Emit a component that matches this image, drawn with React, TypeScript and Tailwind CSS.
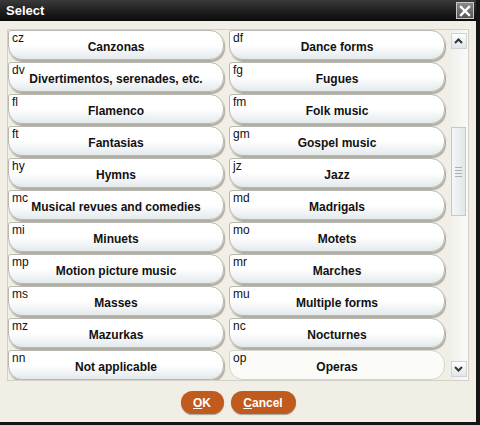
import React from 'react';

const items: [string, string][] = [
  ['cz', 'Canzonas'],
  ['df', 'Dance forms'],
  ['dv', 'Divertimentos, serenades, etc.'],
  ['fg', 'Fugues'],
  ['fl', 'Flamenco'],
  ['fm', 'Folk music'],
  ['ft', 'Fantasias'],
  ['gm', 'Gospel music'],
  ['hy', 'Hymns'],
  ['jz', 'Jazz'],
  ['mc', 'Musical revues and comedies'],
  ['md', 'Madrigals'],
  ['mi', 'Minuets'],
  ['mo', 'Motets'],
  ['mp', 'Motion picture music'],
  ['mr', 'Marches'],
  ['ms', 'Masses'],
  ['mu', 'Multiple forms'],
  ['mz', 'Mazurkas'],
  ['nc', 'Nocturnes'],
  ['nn', 'Not applicable'],
  ['op', 'Operas'],
];

function Choice({ code, label, faded }: { code: string; label: string; faded?: boolean }) {
  return (
    <button
      className={
        faded
          ? 'relative h-[30px] w-[216px] rounded-[14px] rounded-tl-[3px] border border-[#d6d5cc] bg-[#fbfbf8] text-left'
          : 'relative h-[30px] w-[216px] rounded-[14px] rounded-tl-[3px] border border-[#b9b8b0] bg-gradient-to-b from-white via-white to-[#e3eaec] shadow-[1px_2px_1px_rgba(90,88,75,0.45)] text-left'
      }
    >
      <span className="absolute left-[3px] top-[1px] text-[12px] leading-[13px] text-[#111]">{code}</span>
      <span className="absolute left-0 right-0 top-[9px] text-center text-[12px] font-bold leading-[14px] text-[#111]">
        {label}
      </span>
    </button>
  );
}

function Chevron({ up }: { up?: boolean }) {
  return (
    <svg width="9" height="6" viewBox="0 0 9 6">
      <path d={up ? 'M1 5 L4.5 1.5 L8 5' : 'M1 1 L4.5 4.5 L8 1'} stroke="#333" strokeWidth="2" fill="none" />
    </svg>
  );
}

export default function App() {
  return (
    <div
      className="flex h-[425px] w-[480px] flex-col overflow-hidden border-b-[3px] border-r-[4px] border-[#151515] bg-[#f0eee5]"
      style={{ fontFamily: '"Liberation Sans", Arial, sans-serif' }}
    >
      <div className="flex h-[21px] shrink-0 items-center justify-between bg-gradient-to-b from-[#3a3a3a] to-[#0a0a0a] pl-[6px] pr-[2px]">
        <span className="text-[13px] font-bold text-white">Select</span>
        <div className="flex h-[17px] w-[18px] items-center justify-center border border-[#c8c8c8] bg-gradient-to-b from-[#8a8a8a] to-[#555]">
          <svg width="12" height="12" viewBox="0 0 12 12">
            <path d="M2 2 L10 10 M10 2 L2 10" stroke="white" strokeWidth="2.4" strokeLinecap="square" />
          </svg>
        </div>
      </div>

      <div className="pl-[7px] pt-[8px]">
        <div className="flex h-[352px] w-[462px] overflow-hidden border border-[#d3d1c7]">
          <div className="grid h-full flex-1 grid-cols-[216px_216px] content-start gap-x-[5px] gap-y-[2px] overflow-hidden">
            {items.map(([c, l]) => (
              <Choice key={c} code={c} label={l} faded={c === 'op'} />
            ))}
          </div>
          <div className="flex w-[19px] flex-col items-center bg-gradient-to-r from-[#eeeeea] to-[#fafaf8] pt-[3px] pb-[3px]">
            <div className="flex h-[16px] w-[16px] items-center justify-center border border-[#cfd3d6] bg-gradient-to-b from-white to-[#dfe5e8]">
              <Chevron up />
            </div>
            <div className="mt-[78px] flex h-[89px] w-[15px] items-center justify-center border border-[#c3c8cc] bg-gradient-to-r from-[#f4f6f7] to-[#e1e7ea]">
              <div className="flex flex-col gap-[2px]">
                <div className="h-px w-[7px] bg-[#a8b0b5]" />
                <div className="h-px w-[7px] bg-[#a8b0b5]" />
                <div className="h-px w-[7px] bg-[#a8b0b5]" />
                <div className="h-px w-[7px] bg-[#a8b0b5]" />
              </div>
            </div>
            <div className="flex-1" />
            <div className="flex h-[16px] w-[16px] items-center justify-center border border-[#cfd3d6] bg-gradient-to-b from-white to-[#dfe5e8]">
              <Chevron />
            </div>
          </div>
        </div>
      </div>

      <div className="flex justify-center gap-[7px] pt-[10px]">
        <button className="h-[23px] w-[43px] rounded-full bg-[#c05a1d] text-[12px] font-bold text-white shadow-[0_1px_1px_rgba(0,0,0,0.3)]">
          <span className="underline">O</span>K
        </button>
        <button className="h-[23px] w-[65px] rounded-full bg-[#c05a1d] text-[12px] font-bold text-white shadow-[0_1px_1px_rgba(0,0,0,0.3)]">
          <span className="underline">C</span>ancel
        </button>
      </div>
    </div>
  );
}
